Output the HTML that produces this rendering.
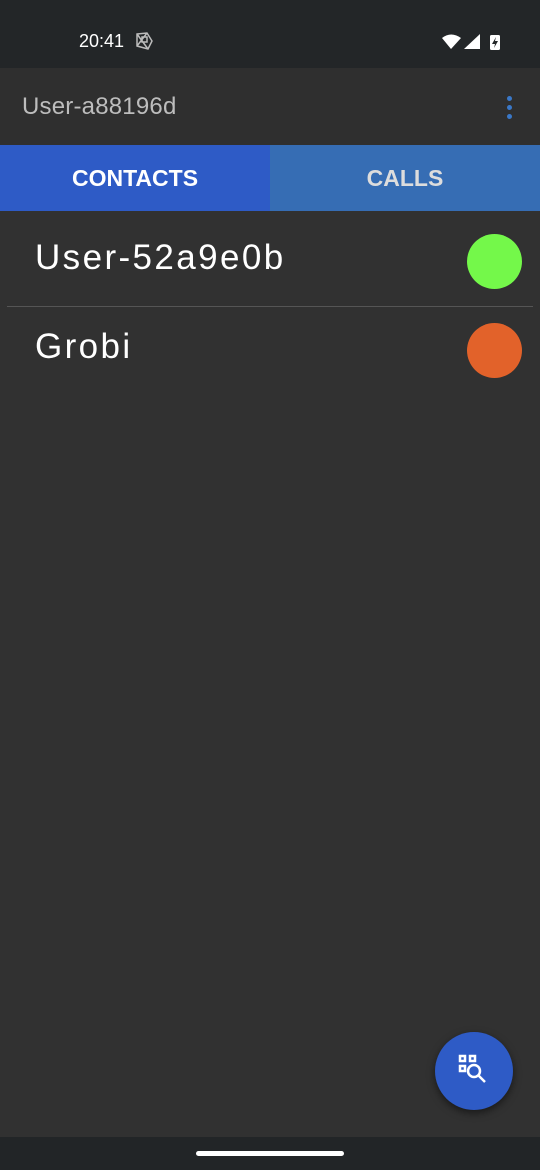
<!DOCTYPE html>
<html><head><meta charset="utf-8"><style>
*{margin:0;padding:0;box-sizing:border-box}
body{width:540px;height:1170px;background:#313131;font-family:"Liberation Sans",sans-serif;position:relative;overflow:hidden}
.sb{position:absolute;left:0;top:0;width:540px;height:68px;background:#232628;color:#fff}
.ab{position:absolute;left:0;top:68px;width:540px;height:77px;background:#2f2f2f}
.tab{position:absolute;top:145px;height:66px;font-size:23px;font-weight:bold;display:flex;align-items:center;justify-content:center}
.row{position:absolute;left:0;width:440px;color:#fff;font-size:35px;letter-spacing:2.4px}
.dot{position:absolute;left:467px;width:55px;height:55px;border-radius:50%}
.nav{position:absolute;left:0;top:1137px;width:540px;height:33px;background:#222527}
</style></head><body>
<div class="sb">
<div style="position:absolute;left:79px;top:31px;font-size:18px">20:41</div>
<svg style="position:absolute;left:134px;top:31px" width="20" height="20" viewBox="0 0 20 20" fill="none" stroke="#bbb" stroke-width="1.5"><path d="M3 3L13 2L18 10L14 18L3 15Z M3 3L14 18 M13 2L3 15 M8 6h5v5h-5z"/></svg>
<svg style="position:absolute;left:441px;top:33px" width="64" height="18" viewBox="0 0 64 18"><path d="M1 5Q10 -2 20 5L10 16Z" fill="#fff"/><path d="M23 16L39 1V16Z" fill="#fff"/><rect x="49" y="2" width="10" height="15" rx="1.5" fill="#fff"/><path d="M55 4L51 11H54L53 15L57 8H54Z" fill="#232628"/></svg>
</div>
<div class="ab">
<div style="position:absolute;left:22px;top:25px;font-size:24px;color:#bdbdbd;letter-spacing:0.2px">User-a88196d</div>
<div style="position:absolute;left:507px;top:28px;width:5px">
<div style="width:5px;height:5px;border-radius:50%;background:#3a78c8;margin-bottom:4px"></div>
<div style="width:5px;height:5px;border-radius:50%;background:#3a78c8;margin-bottom:4px"></div>
<div style="width:5px;height:5px;border-radius:50%;background:#3a78c8"></div></div>
</div>
<div class="tab" style="left:0;width:270px;background:#2e5bc6;color:#fff">CONTACTS</div>
<div class="tab" style="left:270px;width:270px;background:#366db4;color:#ddd">CALLS</div>
<div class="row" style="top:238px;left:35px">User-52a9e0b</div>
<div class="dot" style="top:234px;background:#74f84a"></div>
<div style="position:absolute;left:7px;top:306px;width:526px;height:1px;background:#555"></div>
<div class="row" style="top:327px;left:35px">Grobi</div>
<div class="dot" style="top:323px;background:#e2622a"></div>
<div style="position:absolute;left:435px;top:1032px;width:78px;height:78px;border-radius:50%;background:#2e5bc6;box-shadow:0 3px 8px rgba(0,0,0,.5)">
<svg style="position:absolute;left:22px;top:22px" width="34" height="34" viewBox="0 0 34 34" fill="none" stroke="#fff" stroke-width="2.5"><rect x="3" y="2" width="5" height="5"/><rect x="13" y="2" width="5" height="5"/><rect x="3" y="12" width="5" height="5"/><circle cx="17" cy="17" r="6"/><path d="M21 21L28 28"/></svg>
</div>
<div class="nav"><div style="position:absolute;left:196px;top:14px;width:148px;height:5px;border-radius:3px;background:#fff"></div></div>
</body></html>
